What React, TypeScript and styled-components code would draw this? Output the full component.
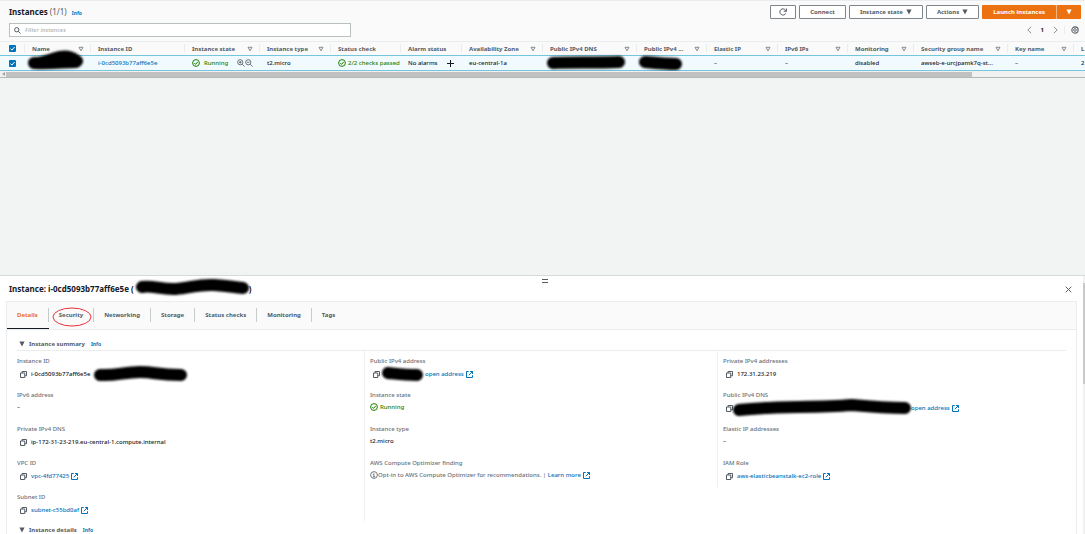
import React from "react";
import styled, { createGlobalStyle, css } from "styled-components";

const GlobalStyle = createGlobalStyle`
  * { box-sizing: border-box; }
  body {
    margin: 0;
    background: #f2f3f3;
    color: #16191f;
    font-family: "Noto Sans", sans-serif;
    font-size: 6px;
    font-weight: 500;
    line-height: 8px;
  }
  button, input { font: inherit; color: inherit; }
  svg { display: block; flex: none; }
`;

const Page = styled.div`
  display: flex;
  flex-direction: column;
  height: 100vh;
  overflow: hidden;
`;

/* ---------- instances list ---------- */

const ListPanel = styled.section`
  flex: none;
  background: #fafafa;
  border-top: 1px solid #eaeded;
  border-bottom: 1px solid #b4b8b8;
`;

const Toolbar = styled.header`
  display: flex;
  justify-content: space-between;
  align-items: center;
  height: 20px;
  padding: 2px 4px 0 9px;
`;

const ListTitle = styled.h1`
  margin: 0;
  font-size: 8px;
  line-height: 12px;
  font-weight: 700;
`;

const Count = styled.span`
  font-weight: 400;
  color: #545b64;
`;

const InfoLink = styled.a`
  margin-left: 5px;
  color: #0073bb;
  font-size: 5px;
  font-weight: 700;
  text-decoration: none;
`;

const SummaryInfo = styled(InfoLink)`
  margin-left: 2px;
`;

const Actions = styled.div`
  display: flex;
  gap: 3px;
`;

const Button = styled.button<{ $primary?: boolean; $icon?: boolean }>`
  display: flex;
  align-items: center;
  justify-content: center;
  gap: 3px;
  height: 14px;
  padding: 0 ${(p) => (p.$icon ? 8 : 10)}px;
  border: 1px solid ${(p) => (p.$primary ? "#ec7211" : "#7d848a")};
  border-radius: 1px;
  background: ${(p) => (p.$primary ? "#ec7211" : "#fff")};
  color: ${(p) => (p.$primary ? "#fff" : "#545b64")};
  font-weight: 700;
  white-space: nowrap;
`;

const SplitButton = styled.div`
  display: flex;
  gap: 1px;
  background: #f7b680;
`;

const SearchRow = styled.div`
  display: flex;
  justify-content: space-between;
  align-items: center;
  height: 20px;
  padding: 0 6px 2px 9px;
`;

const Search = styled.label`
  display: flex;
  align-items: center;
  gap: 4px;
  width: 32%;
  height: 14px;
  padding: 0 5px 0 4px;
  border: 1px solid #b8c0c0;
  background: #fff;
  color: #545b64;
`;

const SearchInput = styled.input`
  flex: 1;
  min-width: 0;
  padding: 0;
  border: 0;
  outline: 0;
  background: none;
  &::placeholder { color: #aab7b8; font-style: italic; opacity: 1; }
`;

const Pager = styled.nav`
  display: flex;
  align-items: center;
  gap: 6px;
  font-weight: 700;
`;

const PageNumber = styled.span`
  margin: 0 3px;
`;

const IconButton = styled.button`
  display: flex;
  padding: 0;
  border: 0;
  background: none;
  color: #545b64;
`;

const PagerSettings = styled.div`
  padding-left: 6px;
  border-left: 1px solid #eaeded;
`;

const TableWrap = styled.div`
  overflow: hidden;
`;

const Table = styled.table`
  width: 1222px;
  table-layout: fixed;
  border-collapse: separate;
  border-spacing: 0;
`;

const cell = css`
  height: 16px;
  padding: 0 0 0 7px;
  text-align: left;
  white-space: nowrap;
`;

const Th = styled.th`
  ${cell}
  height: 14px;
  border-top: 1px solid #eaeded;
  color: #545b64;
  font-weight: 700;
`;

const HeadInner = styled.div`
  display: flex;
  align-items: center;
  justify-content: space-between;
  height: 9px;
  padding-right: 6px;
  border-right: 1px solid #eaeded;
`;

const Td = styled.td`
  ${cell}
  background: #f1faff;
  border-top: 1px solid #74c6dd;
  border-bottom: 1px solid #74c6dd;
`;

const Inline = styled.div<{ $gap?: number; $color?: string }>`
  display: flex;
  align-items: center;
  gap: ${(p) => p.$gap ?? 2}px;
  color: ${(p) => p.$color ?? "inherit"};
`;

const PushRight = styled.span`
  display: flex;
  margin: 0 7px 0 auto;
  color: #545b64;
`;

const CheckLabel = styled.label`
  position: relative;
  display: block;
  width: 7px;
  height: 7px;
  margin-left: 2px;
  color: #fff;
  svg { position: absolute; inset: 0; }
`;

const CheckInput = styled.input`
  appearance: none;
  display: block;
  width: 7px;
  height: 7px;
  margin: 0;
  border-radius: 1px;
  background: #0073bb;
`;

const HScroll = styled.div`
  display: flex;
  align-items: center;
  height: 6px;
  background: #f1f1f1;
  color: #a3a3a3;
`;

const HArrow = styled.div`
  display: flex;
  justify-content: center;
  width: 6px;
`;

const HThumb = styled.div`
  width: 89%;
  height: 5px;
  background: #c1c1c1;
`;

const Gap = styled.div`
  flex: 0 0 197px;
`;

/* ---------- details panel ---------- */

const DetailPanel = styled.section`
  display: flex;
  flex: 1;
  min-height: 0;
  overflow: hidden;
  border-top: 1px solid #d5dbdb;
  background: #fff;
`;

const DetailMain = styled.div`
  flex: 1;
  min-width: 0;
  padding: 0 6px 0 6px;
`;

const VScroll = styled.div`
  width: 2px;
  padding-top: 7px;
  background: #f1f1f1;
`;

const VThumb = styled.div`
  height: 101px;
  background: #c9c9c9;
`;

const Handle = styled.div`
  width: 6px;
  height: 4px;
  margin: 3px 0 0 50%;
  border-top: 1px solid #545b64;
  border-bottom: 1px solid #545b64;
`;

const DetailHead = styled.header`
  display: flex;
  align-items: center;
  justify-content: space-between;
  height: 18px;
  padding: 0 5px 6px 3px;
`;

const DetailTitle = styled.h2`
  display: flex;
  margin: 0;
  font-size: 8px;
  line-height: 12px;
  font-weight: 700;
`;

const Box = styled.div`
  border: 1px solid #eaeded;
  border-bottom: 0;
`;

const Tabs = styled.nav`
  display: flex;
  align-items: stretch;
  height: 28px;
  background: #fafafa;
  border-bottom: 1px solid #eaeded;
`;

const Tab = styled.button<{ $active?: boolean }>`
  position: relative;
  display: flex;
  align-items: center;
  padding: 0;
  border: 0;
  border-bottom: 1px solid ${(p) => (p.$active ? "#16191f" : "transparent")};
  background: none;
  color: ${(p) => (p.$active ? "#ec7211" : "#545b64")};
  font-weight: 700;
  white-space: nowrap;
`;

const TabLabel = styled.span<{ $last?: boolean }>`
  display: flex;
  align-items: center;
  height: 14px;
  padding: 0 10px 0 10px;
  border-right: ${(p) => (p.$last ? 0 : 1)}px solid #c5cccc;
`;

const Circled = styled.svg`
  position: absolute;
  left: 3px;
  top: 5px;
`;

const Content = styled.div`
  padding: 9px 10px 0 10px;
`;

const SectionHead = styled.h3`
  display: flex;
  align-items: center;
  gap: 4px;
  height: 12px;
  margin: 0;
  padding: 0 0 2px 2px;
  border-bottom: 1px solid #eaeded;
  color: #545b64;
  font-size: 6px;
  font-weight: 700;
`;

const Columns = styled.div`
  display: grid;
  grid-template-columns: repeat(3, 1fr);
  align-items: start;
  gap: 5px;
  margin: 0 -5px 4px 0;
`;

const Column = styled.dl`
  margin: 0;
  border-right: 1px solid #eff1f1;
  &:last-child { border-right: 0; }
`;

const Field = styled.div`
  height: 34px;
  padding-top: 6px;
`;

const Term = styled.dt`
  color: #687078;
`;

const Value = styled.dd<{ $copy?: boolean }>`
  display: flex;
  align-items: center;
  gap: 4px;
  height: 8px;
  margin: ${(p) => (p.$copy ? "5px 0 0 3px" : "4px 0 0 0")};
  white-space: nowrap;
`;

const Link = styled.a`
  display: inline-flex;
  align-items: center;
  gap: 2px;
  color: #0073bb;
  text-decoration: none;
`;

const Muted = styled.span`
  color: #687078;
`;

/* ---------- drawings ---------- */

const RedactBox = styled.span<{ $w: number }>`
  position: relative;
  display: inline-block;
  flex: none;
  width: ${(p) => p.$w}px;
  height: 8px;
  vertical-align: middle;
  svg { position: absolute; left: 0; top: 0; overflow: visible; filter: blur(1px); }
`;

function Redaction({ w, d, thick = 12 }: { w: number; d: string; thick?: number }) {
  return (
    <RedactBox $w={w}>
      <svg width={w} height="8" fill="none" stroke="#000" strokeWidth={thick} strokeLinecap="round" strokeLinejoin="round">
        <path d={d} />
      </svg>
    </RedactBox>
  );
}

const Caret = ({ hollow = false, size = 6 }: { hollow?: boolean; size?: number }) => (
  <svg width={size} height={size} viewBox="0 0 6 6">
    <path
      d={hollow ? "M1 1.3h4L3 4.8z" : "M.4.6h5.2L3 5.6z"}
      fill={hollow ? "none" : "currentColor"}
      stroke={hollow ? "#687078" : "none"}
      strokeWidth=".8"
    />
  </svg>
);

const Refresh = () => (
  <svg width="8" height="8" viewBox="0 0 16 16" fill="none" stroke="currentColor" strokeWidth="2">
    <path d="M13.5 10.5A6.2 6.2 0 1 1 13 4.4L14.5 6.5" />
    <path d="M14.8 1v5.5H9.5" />
  </svg>
);

const SearchIcon = () => (
  <svg width="7" height="7" viewBox="0 0 14 14" fill="none" stroke="currentColor" strokeWidth="2">
    <circle cx="5.5" cy="5.5" r="4.3" />
    <path d="M8.8 8.8l4.4 4.4" />
  </svg>
);

const ZoomIcon = ({ plus = false }: { plus?: boolean }) => (
  <svg width="8" height="8" viewBox="0 0 16 16" fill="none" stroke="currentColor" strokeWidth="1.7">
    <circle cx="6.5" cy="6.5" r="5.2" />
    <path d={plus ? "M10.5 10.5l4.5 4.5M4 6.5h5M6.5 4v5" : "M10.5 10.5l4.5 4.5M4 6.5h5"} />
  </svg>
);

const Gear = () => (
  <svg width="8" height="8" viewBox="0 0 16 16" fill="none" stroke="currentColor">
    <circle cx="8" cy="8" r="6.3" strokeWidth="2.2" />
    <circle cx="8" cy="8" r="2.6" strokeWidth="1.8" />
  </svg>
);

const Chevron = ({ right = false }: { right?: boolean }) => (
  <svg width="5" height="8" viewBox="0 0 5 8" fill="none" stroke="#879596" strokeWidth="1">
    <path d={right ? "M.8.8L4.2 4 .8 7.2" : "M4.2.8L.8 4l3.4 3.2"} />
  </svg>
);

const OkIcon = () => (
  <svg width="8" height="8" viewBox="0 0 16 16" fill="none" stroke="#1d8102" strokeWidth="2">
    <circle cx="8" cy="8" r="6.8" />
    <path d="M4.6 8l2.6 2.8 4.4-5" />
  </svg>
);

const InfoIcon = () => (
  <svg width="8" height="8" viewBox="0 0 16 16" fill="none" stroke="#545b64" strokeWidth="1.6">
    <circle cx="8" cy="8" r="6.8" />
    <path d="M8 3.6v1.8M6 7.3h2v4.2M5.6 11.7h4.8" />
  </svg>
);

const Plus = () => (
  <svg width="8" height="8" viewBox="0 0 8 8" stroke="#16191f" strokeWidth="1">
    <path d="M4.5 1v7M1 4.5h7" />
  </svg>
);

const Tick = () => (
  <svg width="7" height="7" viewBox="0 0 7 7" fill="none" stroke="currentColor" strokeWidth="1">
    <path d="M1.5 3.6l1.4 1.5L5.6 2" />
  </svg>
);

const Copy = () => (
  <svg width="7" height="7" viewBox="0 0 14 14" fill="none" stroke="#545b64" strokeWidth="2">
    <path d="M1 4h8.5v9H1z" />
    <path d="M4 4V1h9v8.5H9.5" />
  </svg>
);

const External = () => (
  <svg width="7" height="7" viewBox="0 0 14 14" fill="none" stroke="#0073bb" strokeWidth="2">
    <path d="M5.5 1H1v12h12V8.5" />
    <path d="M8 1h5v5M13 1L5.5 8.5" />
  </svg>
);

const Close = () => (
  <svg width="7" height="7" viewBox="0 0 7 7" stroke="currentColor" strokeWidth="1">
    <path d="M.7.7l5.6 5.6M6.3.7L.7 6.3" />
  </svg>
);

/* ---------- content ---------- */

const Check = ({ label }: { label: string }) => (
  <CheckLabel>
    <CheckInput type="checkbox" defaultChecked aria-label={label} />
    <Tick />
  </CheckLabel>
);

const columns: { title: string; width: number; filter?: boolean }[] = [
  { title: "Name", width: 66, filter: true },
  { title: "Instance ID", width: 94 },
  { title: "Instance state", width: 75, filter: true },
  { title: "Instance type", width: 71, filter: true },
  { title: "Status check", width: 70 },
  { title: "Alarm status", width: 61 },
  { title: "Availability Zone", width: 81, filter: true },
  { title: "Public IPv4 DNS", width: 94, filter: true },
  { title: "Public IPv4 ...", width: 70, filter: true },
  { title: "Elastic IP", width: 71, filter: true },
  { title: "IPv6 IPs", width: 70, filter: true },
  { title: "Monitoring", width: 66, filter: true },
  { title: "Security group name", width: 94, filter: true },
  { title: "Key name", width: 66, filter: true },
  { title: "L", width: 148, filter: true },
];

const tabs = ["Details", "Security", "Networking", "Storage", "Status checks", "Monitoring", "Tags"];

function FieldItem({ label, copy, children }: { label: string; copy?: boolean; children: React.ReactNode }) {
  return (
    <Field>
      <Term>{label}</Term>
      <Value $copy={copy}>
        {copy && <Copy />}
        {children}
      </Value>
    </Field>
  );
}

const ExtLink = ({ children }: { children: React.ReactNode }) => (
  <Link href="#">
    {children}
    <External />
  </Link>
);

export default function App() {
  return (
    <Page>
      <GlobalStyle />
      <ListPanel>
        <Toolbar>
          <ListTitle>
            Instances <Count>(1/1)</Count>
            <InfoLink href="#">Info</InfoLink>
          </ListTitle>
          <Actions>
            <Button $icon aria-label="Refresh"><Refresh /></Button>
            <Button>Connect</Button>
            <Button>Instance state <Caret /></Button>
            <Button>Actions <Caret /></Button>
            <SplitButton>
              <Button $primary>Launch instances</Button>
              <Button $primary $icon aria-label="More launch options"><Caret /></Button>
            </SplitButton>
          </Actions>
        </Toolbar>
        <SearchRow>
          <Search>
            <SearchIcon />
            <SearchInput placeholder="Filter instances" aria-label="Filter instances" />
          </Search>
          <Pager>
            <IconButton aria-label="Previous page"><Chevron /></IconButton>
            <PageNumber>1</PageNumber>
            <IconButton aria-label="Next page"><Chevron right /></IconButton>
            <PagerSettings>
              <IconButton aria-label="Preferences"><Gear /></IconButton>
            </PagerSettings>
          </Pager>
        </SearchRow>
        <TableWrap>
          <Table>
            <colgroup>
              <col style={{ width: 25 }} />
              {columns.map((c) => <col key={c.title} style={{ width: c.width }} />)}
            </colgroup>
            <thead>
              <tr>
                <Th><HeadInner><Check label="Select all instances" /></HeadInner></Th>
                {columns.map((c) => (
                  <Th key={c.title}>
                    <HeadInner>{c.title}{c.filter && <Caret hollow />}</HeadInner>
                  </Th>
                ))}
              </tr>
            </thead>
            <tbody>
              <tr>
                <Td><Check label="Select instance" /></Td>
                <Td><Redaction w={52} d="M2 4C12 4 18 0 28 -2S42 0 45 2M2 4C20 5 32 3 44 3" /></Td>
                <Td><Link href="#">i-0cd5093b77aff6e5e</Link></Td>
                <Td>
                  <Inline $gap={4} $color="#1d8102">
                    <OkIcon />Running
                    <PushRight><ZoomIcon plus /><ZoomIcon /></PushRight>
                  </Inline>
                </Td>
                <Td>t2.micro</Td>
                <Td><Inline $color="#1d8102"><OkIcon />2/2 checks passed</Inline></Td>
                <Td><Inline $gap={8}>No alarms <Plus /></Inline></Td>
                <Td>eu-central-1a</Td>
                <Td><Redaction w={76} d="M3 4C20 3 45 4 69 3" /></Td>
                <Td><Redaction w={40} d="M1 3C12 4 25 5 32 5" /></Td>
                <Td>–</Td>
                <Td>–</Td>
                <Td>disabled</Td>
                <Td>awseb-e-urcjpamk7q-st...</Td>
                <Td>–</Td>
                <Td>2</Td>
              </tr>
            </tbody>
          </Table>
        </TableWrap>
        <HScroll>
          <HArrow>
            <svg width="3" height="4" viewBox="0 0 3 4"><path d="M3 0v4L0 2z" fill="currentColor" /></svg>
          </HArrow>
          <HThumb />
        </HScroll>
      </ListPanel>
      <Gap />
      <DetailPanel>
        <DetailMain>
          <Handle />
          <DetailHead>
            <DetailTitle>
              Instance: i-0cd5093b77aff6e5e (
              <Redaction w={115} d="M8 4C18 2 28 7 42 6S65 1 80 2S98 4 109 5" />)
            </DetailTitle>
            <IconButton aria-label="Close"><Close /></IconButton>
          </DetailHead>
          <Box>
            <Tabs>
              {tabs.map((t, i) => (
                <Tab key={t} $active={i === 0}>
                  <TabLabel $last={i === tabs.length - 1}>{t}</TabLabel>
                  {t === "Security" && (
                    <Circled width="40" height="20" viewBox="0 0 40 20" fill="none" stroke="#e8323c">
                      <ellipse cx="20" cy="10" rx="19" ry="9" />
                    </Circled>
                  )}
                </Tab>
              ))}
            </Tabs>
            <Content>
              <SectionHead><Caret />Instance summary<SummaryInfo href="#">Info</SummaryInfo></SectionHead>
              <Columns>
                <Column>
                  <FieldItem label="Instance ID" copy>
                    <span>i-0cd5093b77aff6e5e</span>
                    <Redaction w={94} d="M6 5C22 6 30 2 46 2S62 5 87 5" />
                  </FieldItem>
                  <FieldItem label="IPv6 address">–</FieldItem>
                  <FieldItem label="Private IPv4 DNS" copy>ip-172-31-23-219.eu-central-1.compute.internal</FieldItem>
                  <FieldItem label="VPC ID" copy><ExtLink>vpc-4fd77425</ExtLink></FieldItem>
                  <FieldItem label="Subnet ID" copy><ExtLink>subnet-c55bd0af</ExtLink></FieldItem>
                </Column>
                <Column>
                  <FieldItem label="Public IPv4 address" copy>
                    <Redaction w={37} d="M4 3C14 4 22 5 33 5" />
                    <ExtLink>open address</ExtLink>
                  </FieldItem>
                  <FieldItem label="Instance state"><Inline $color="#1d8102"><OkIcon />Running</Inline></FieldItem>
                  <FieldItem label="Instance type">t2.micro</FieldItem>
                  <FieldItem label="AWS Compute Optimizer finding">
                    <Inline $gap={0}>
                      <InfoIcon />
                      <Muted>Opt-in to AWS Compute Optimizer for recommendations. |&nbsp;</Muted>
                      <ExtLink>Learn more</ExtLink>
                    </Inline>
                  </FieldItem>
                </Column>
                <Column>
                  <FieldItem label="Private IPv4 addresses" copy>172.31.23.219</FieldItem>
                  <FieldItem label="Public IPv4 DNS" copy>
                    <Redaction w={170} d="M2 6C35 2 75 4 115 1C126 2 148 4 168 4" />
                    <ExtLink>open address</ExtLink>
                  </FieldItem>
                  <FieldItem label="Elastic IP addresses">–</FieldItem>
                  <FieldItem label="IAM Role" copy><ExtLink>aws-elasticbeanstalk-ec2-role</ExtLink></FieldItem>
                </Column>
              </Columns>
              <SectionHead><Caret />Instance details<SummaryInfo href="#">Info</SummaryInfo></SectionHead>
            </Content>
          </Box>
        </DetailMain>
        <VScroll><VThumb /></VScroll>
      </DetailPanel>
    </Page>
  );
}
